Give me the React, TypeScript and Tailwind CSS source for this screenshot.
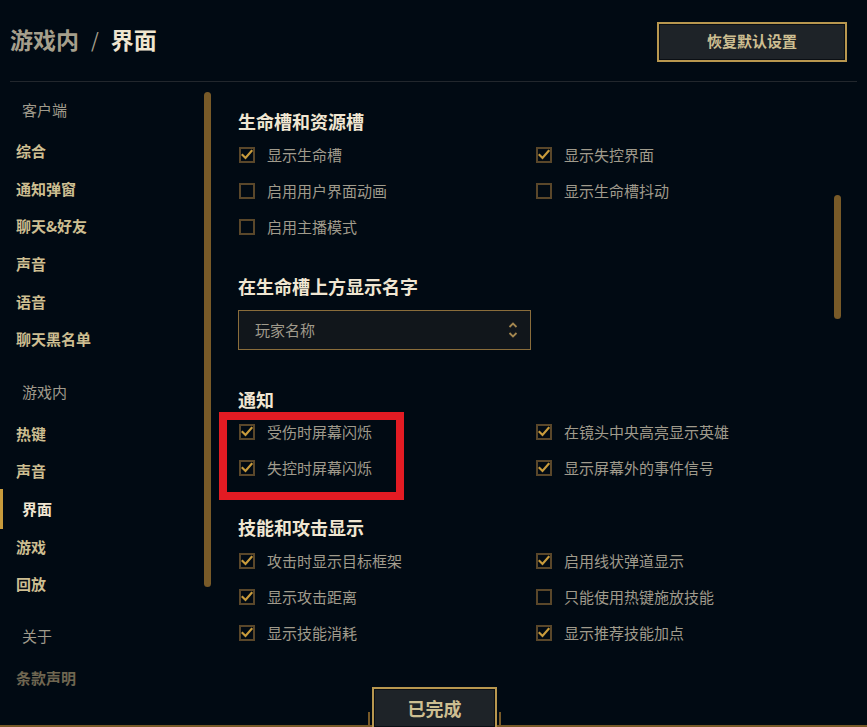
import React from "react";

const FONT = { fontFamily: '"Noto Sans CJK SC", "Noto Sans", sans-serif' };

function Box({ checked }: { checked: boolean }) {
  return (
    <span className="w-[16px] h-[16px] border-2 border-[#5a472a] flex items-center justify-center shrink-0">
      {checked && (
        <svg width="12" height="12" viewBox="0 0 12 12">
          <path d="M1.5 6 L4.5 9 L10.5 2" stroke="#c89b3c" strokeWidth="2.2" fill="none" strokeLinecap="square" />
        </svg>
      )}
    </span>
  );
}

function Check({ label, checked }: { label: string; checked: boolean }) {
  return (
    <div className="flex items-center h-[36px]">
      <span className="ml-[1px]">
        <Box checked={checked} />
      </span>
      <span className="ml-[12px] text-[15px] leading-none text-[#a09b8c] -mt-[1px]">{label}</span>
    </div>
  );
}

function Heading({ children, className = "" }: { children: React.ReactNode; className?: string }) {
  return (
    <div className={"h-[24px] flex items-center text-[18px] font-bold text-[#f0e6d2] " + className}>{children}</div>
  );
}

function Grid({ items }: { items: [string, boolean][] }) {
  return (
    <div className="grid grid-cols-[297px_1fr]">
      {items.map(([l, c], i) => (
        <Check key={i} label={l} checked={c} />
      ))}
    </div>
  );
}

function NavLabel({ children, className = "" }: { children: React.ReactNode; className?: string }) {
  return (
    <div className={"h-[20px] flex items-center pl-[22px] text-[15px] text-[#a09b8c] " + className}>{children}</div>
  );
}

function NavItem({ children, active, faded }: { children: React.ReactNode; active?: boolean; faded?: boolean }) {
  return (
    <div className="relative h-[37.6px] flex items-center">
      {active && <span className="absolute left-0 top-1/2 -translate-y-1/2 h-[40px] w-[3px] bg-[#c89b3c]" />}
      <span
        className={
          "text-[15px] font-bold leading-none " +
          (active ? "pl-[22px] text-[#f0e6d2]" : faded ? "pl-[16px] text-[#6f6651]" : "pl-[16px] text-[#cdbe91]")
        }
      >
        {children}
      </span>
    </div>
  );
}

export default function App() {
  return (
    <div className="relative w-[867px] h-[727px] bg-[#010a13] overflow-hidden flex flex-col" style={FONT}>
      {/* header */}
      <div className="mx-[10px] h-[82px] shrink-0 flex items-center justify-between border-b border-[#22272d]">
        <div className="flex items-center text-[23px] font-bold leading-none -mt-[2px]">
          <span className="text-[#a59f8c]">游戏内</span>
          <span className="text-[#a59f8c] mx-[12px] font-normal text-[20px]">/</span>
          <span className="text-[#efe5d0]">界面</span>
        </div>
        <button className="mr-[10px] mt-[2px] w-[190px] h-[40px] border-2 border-[#b8974f] bg-[#1e2328] shadow-[inset_0_0_0_1px_#0b0f14] text-[15px] font-bold text-[#cdbe91]">
          恢复默认设置
        </button>
      </div>

      {/* body */}
      <div className="flex-1 flex min-h-0">
        {/* sidebar */}
        <div className="flex shrink-0">
          <div className="w-[204px] pt-[18px]">
            <NavLabel className="mb-[12px]">客户端</NavLabel>
            <NavItem>综合</NavItem>
            <NavItem>通知弹窗</NavItem>
            <NavItem>聊天&amp;好友</NavItem>
            <NavItem>声音</NavItem>
            <NavItem>语音</NavItem>
            <NavItem>聊天黑名单</NavItem>
            <NavLabel className="mt-[25px] mb-[12px]">游戏内</NavLabel>
            <NavItem>热键</NavItem>
            <NavItem>声音</NavItem>
            <NavItem active>界面</NavItem>
            <NavItem>游戏</NavItem>
            <NavItem>回放</NavItem>
            <NavLabel className="mt-[24px] mb-[12px]">关于</NavLabel>
            <NavItem faded>条款声明</NavItem>
          </div>
          <div className="w-[7px] h-[495px] mt-[10px] rounded-full bg-[#785a28]" />
        </div>

        {/* content */}
        <div className="flex-1 flex">
          <div className="flex-1 pl-[27px] pt-[27px]">
            <Heading>生命槽和资源槽</Heading>
            <div className="mt-[4px]">
              <Grid
                items={[
                  ["显示生命槽", true],
                  ["显示失控界面", true],
                  ["启用用户界面动画", false],
                  ["显示生命槽抖动", false],
                  ["启用主播模式", false],
                ]}
              />
            </div>

            <Heading className="mt-[29px]">在生命槽上方显示名字</Heading>
            <div className="mt-[12px] w-[293px] h-[40px] border border-[#8a6d3b] bg-[#11161b] flex items-center justify-between pl-[16px] pr-[12px]">
              <span className="text-[15px] text-[#a09b8c]">玩家名称</span>
              <svg width="10" height="18" viewBox="0 0 10 18">
                <path d="M1.5 6 L5 2.5 L8.5 6" stroke="#a4874f" strokeWidth="1.8" fill="none" />
                <path d="M1.5 12 L5 15.5 L8.5 12" stroke="#a4874f" strokeWidth="1.8" fill="none" />
              </svg>
            </div>

            <Heading className="mt-[37px]">通知</Heading>
            <div className="mt-[3px]">
              <Grid
                items={[
                  ["受伤时屏幕闪烁", true],
                  ["在镜头中央高亮显示英雄", true],
                  ["失控时屏幕闪烁", true],
                  ["显示屏幕外的事件信号", true],
                ]}
              />
            </div>

            <Heading className="mt-[29px]">技能和攻击显示</Heading>
            <div className="mt-[4px]">
              <Grid
                items={[
                  ["攻击时显示目标框架", true],
                  ["启用线状弹道显示", true],
                  ["显示攻击距离", true],
                  ["只能使用热键施放技能", false],
                  ["显示技能消耗", true],
                  ["显示推荐技能加点", true],
                ]}
              />
            </div>
          </div>
          <div className="w-[7px] h-[124px] mt-[113px] mr-[26px] rounded-full bg-[#785a28]" />
        </div>
      </div>

      {/* footer line */}
      <div className="relative h-[2px] shrink-0 bg-[#785a28]">
        <span className="absolute left-[368px] bottom-0 w-[2px] h-[15px] bg-[#785a28]" />
        <span className="absolute left-[499px] bottom-0 w-[2px] h-[15px] bg-[#785a28]" />
        <button className="absolute left-[372px] bottom-0 w-[125px] h-[40px] border-2 border-b-0 border-[#b8974f] bg-[#1e2328] shadow-[inset_0_0_0_1px_#0b0f14] text-[18px] font-bold text-[#cdbe91]">
          已完成
        </button>
      </div>

      {/* red annotation */}
      <div className="absolute left-[219px] top-[412px] w-[185px] h-[88px] border-[8px] border-[#e31b23]" />
    </div>
  );
}
